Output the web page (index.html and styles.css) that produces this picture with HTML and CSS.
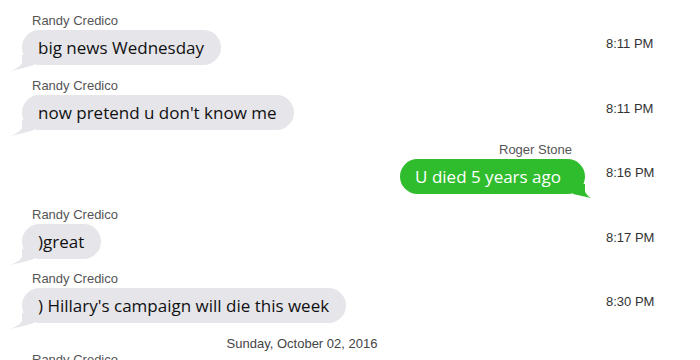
FILE: index.html
```html
<!DOCTYPE html>
<html lang="en">
<head>
<meta charset="UTF-8">
<title>Messages</title>
<link rel="stylesheet" href="styles.css">
</head>
<body>
<div class="thread">
  <div class="msg in">
    <div class="main">
      <div class="sender">Randy Credico</div>
      <div class="bubble">big news Wednesday<svg class="tail" viewBox="0 0 32 20"><path d="M12 2 L12 10 Q10 14 1 18 Q14 15 24 12 L24 2 Z"/></svg></div>
    </div>
    <div class="time">8:11 PM</div>
  </div>
  <div class="msg in">
    <div class="main">
      <div class="sender">Randy Credico</div>
      <div class="bubble">now pretend u don't know me<svg class="tail" viewBox="0 0 32 20"><path d="M12 2 L12 10 Q10 14 1 18 Q14 15 24 12 L24 2 Z"/></svg></div>
    </div>
    <div class="time">8:11 PM</div>
  </div>
  <div class="msg out">
    <div class="main">
      <div class="sender">Roger Stone</div>
      <div class="bubble">U died 5 years ago<svg class="tail" viewBox="0 0 32 20"><path d="M20 2 L20 9 Q21 13 26 16 Q17 14 8 12 L8 2 Z"/></svg></div>
    </div>
    <div class="time">8:16 PM</div>
  </div>
  <div class="msg in">
    <div class="main">
      <div class="sender">Randy Credico</div>
      <div class="bubble">)great<svg class="tail" viewBox="0 0 32 20"><path d="M12 2 L12 10 Q10 14 1 18 Q14 15 24 12 L24 2 Z"/></svg></div>
    </div>
    <div class="time">8:17 PM</div>
  </div>
  <div class="msg in">
    <div class="main">
      <div class="sender">Randy Credico</div>
      <div class="bubble">) Hillary's campaign will die this week<svg class="tail" viewBox="0 0 32 20"><path d="M12 2 L12 10 Q10 14 1 18 Q14 15 24 12 L24 2 Z"/></svg></div>
    </div>
    <div class="time">8:30 PM</div>
  </div>
  <div class="day">Sunday, October 02, 2016</div>
  <div class="msg in">
    <div class="main">
      <div class="sender">Randy Credico</div>
    </div>
  </div>
</div>
</body>
</html>
```

FILE: styles.css
```css
body { margin: 0; background: #fff; font-family: "Liberation Sans", Arial, sans-serif; overflow: hidden; }
.thread { width: 700px; padding-top: 13px; }
.msg { display: flex; margin-bottom: 12.5px; }
.main { width: 604px; display: flex; flex-direction: column; }
.msg.in .main { align-items: flex-start; padding-left: 22px; box-sizing: border-box; }
.msg.out .main { align-items: flex-end; padding-right: 19px; box-sizing: border-box; }
.sender { font-size: 13px; line-height: 16px; color: #555; margin-bottom: 1px; }
.msg.in .sender { padding-left: 10px; }
.msg.out .sender { padding-right: 13px; }
.bubble { position: relative; height: 35px; line-height: 35px; border-radius: 18px; padding: 0 17px 0 16px; font-family: "Open Sans", "Noto Sans", sans-serif; font-size: 17px; color: #111; background: #e5e5ea; white-space: nowrap; }
.msg.out .bubble { background: #30bd2d; color: #fff; padding: 0 24px 0 15px; }
.tail { position: absolute; bottom: -8px; width: 32px; height: 20px; }
.msg.in .tail { left: -12px; fill: #e5e5ea; }
.msg.out .tail { right: -12px; fill: #30bd2d; }
.time { padding-top: 23px; padding-left: 2px; font-size: 13px; line-height: 16px; color: #333; }
.day { width: 604px; text-align: center; font-size: 13px; line-height: 16px; color: #444; margin-top: 1.5px; }
```
